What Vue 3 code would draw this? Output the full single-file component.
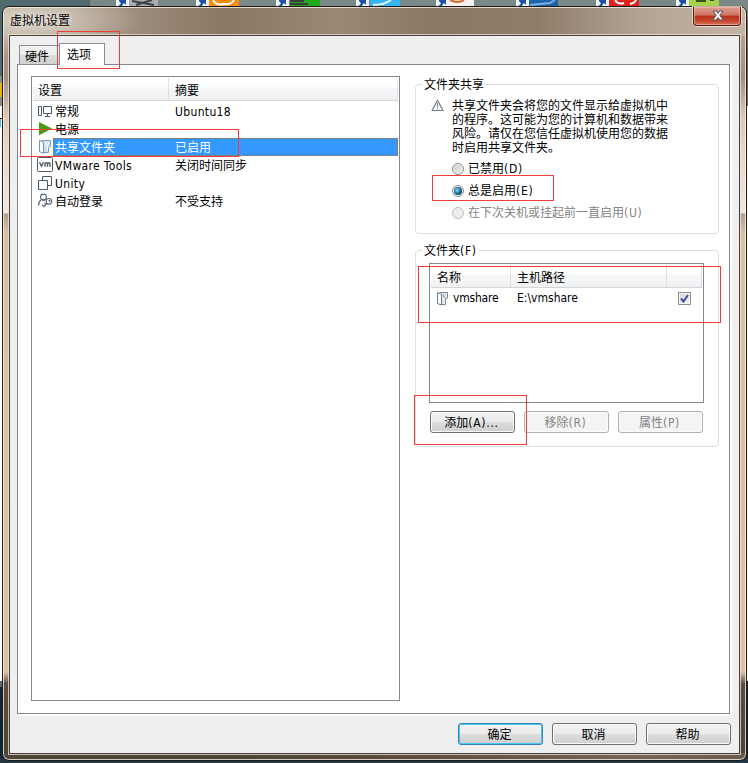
<template>
  <div class="desktop">
    <svg class="wallpaper" width="748" height="763" viewBox="0 0 748 763">
      <rect width="748" height="763" fill="#4f6b70" />
      <rect x="90" width="658" height="30" fill="#7a8988" />
      <rect x="0" y="76" width="3" height="30" fill="#8d8c87" />
      <rect x="0" y="83" width="2" height="14" fill="#f0b010" />
      <rect x="0" y="106" width="3" height="575" fill="#fff" />
      <rect x="0" y="118" width="3" height="1" fill="#111" />
      <rect x="0" y="119" width="1" height="8" fill="#3ec3f0" />
      <rect x="0" y="681" width="3" height="6" fill="#5b6670" />
      <rect x="0" y="687" width="3" height="76" fill="#0d2638" />
      <rect x="746" y="20" width="2" height="86" fill="#6d6760" />
      <rect x="746" y="106" width="2" height="575" fill="#fff" />
      <rect x="746" y="681" width="2" height="82" fill="#0d2638" />
      <rect x="0" y="758" width="748" height="5" fill="#223746" />
      <g v-for="(icon, i) in desktopIcons" :key="i" :transform="`translate(${116 + i * 80} 0)`">
        <rect :x="icon.x" width="30" height="9" :fill="icon.color" />
        <path :d="icon.mark" :stroke="icon.stroke" stroke-width="2" fill="none" />
        <rect width="13" height="7" fill="#eef2fb" />
        <path d="M2 6.500L5 3.500L3 1V0H10V5L8 3L5 7H2Z" fill="#22509c" />
      </g>
    </svg>

    <div class="window">
      <header class="titlebar">
        <h1 class="title">虚拟机设置</h1>
        <button class="close" type="button">
          <svg width="12" height="11" viewBox="0 0 12 11">
            <path d="M1 1H4.300L6 3.200L7.700 1H11L7.900 5.300L11.200 10H7.700L6 7.600L4.300 10H.8L4.100 5.300Z" fill="#f7f7f7" stroke="#50515f" stroke-width="1" />
          </svg>
        </button>
      </header>

      <main class="client">
        <nav class="tabs">
          <span class="tab">硬件</span>
          <span class="tab active">选项</span>
        </nav>

        <div class="panel">
          <div class="listview settings">
            <div class="head">
              <span class="cell-name">设置</span>
              <span class="cell-value">摘要</span>
            </div>
            <div
              v-for="row in rows"
              :key="row.name"
              class="row"
              :class="{ selected: row.name === selected }"
              @click="selected = row.name"
            >
              <svg class="row-icon" width="16" height="18" viewBox="0 0 16 18">
                <g v-if="row.icon === 'general'" fill="none" stroke="#4b5a68">
                  <path d="M1.500 4.500H4.500V13.500H1.500ZM6.500 4.500H14.500V11.500H6.500ZM10.500 11.500V14M8 14.500H13" />
                </g>
                <path v-else-if="row.icon === 'power'" d="M2 2L15 8.500L2 15.200Z" fill="#459a14" />
                <g v-else-if="row.icon === 'folder'" stroke="#6f9fc8">
                  <path d="M4.500 2.500H13.500V8.500L11.500 9.500V14.500H7" fill="#cfe2f2" />
                  <path d="M2.500 2.500L6.500 4.500V15.500L2.500 13.500Z" fill="#fff" stroke="#7c8fa0" />
                  <path d="M8.500 4V6.500L10.500 8V12M12 4L10.500 7.500" fill="none" stroke="#fff" />
                </g>
                <g v-else-if="row.icon === 'tools'">
                  <rect x=".5" y="1.500" width="15" height="14" rx="1" fill="#fff" stroke="#4b5a68" />
                  <path d="M2.500 6.300L4.500 10.300L6.500 6.300M8 10.800V7.800Q8 6.800 9.200 6.800T10.500 7.800V10.800M10.500 7.800Q10.700 6.800 11.800 6.800T13 7.800V10.800" fill="none" stroke="#4b5a68" stroke-width="1.400" />
                </g>
                <g v-else-if="row.icon === 'unity'" fill="#fff" stroke="#4b5a68">
                  <path d="M5.500 2.500H14.500V11.500H5.500Z" />
                  <path d="M1.500 6.500H10.500V15.500H1.500Z" />
                </g>
                <g v-else fill="none" stroke="#596674" stroke-width="1.100">
                  <circle cx="6.500" cy="5" r="2.900" />
                  <path d="M4.500 7.500Q1.500 9.500 1.500 13.500M8 8L5.500 9" />
                  <circle cx="11.900" cy="9.300" r="2.800" />
                  <path d="M10 11.500L6.500 15M7 14.500L5 12.800M9 12.500L7.500 11" />
                  <circle cx="12.500" cy="8.800" r=".5" />
                </g>
              </svg>
              <div class="row-body">
                <span class="row-name" :class="{ latin: isLatin(row.name) }">{{ row.name }}</span>
                <span class="row-value" :class="{ latin: isLatin(row.value) }">{{ row.value }}</span>
              </div>
            </div>
          </div>

          <div class="side">
            <section class="group sharing">
              <h2 class="legend">文件夹共享</h2>
              <div class="notice">
                <svg width="13" height="13" viewBox="0 0 13 13">
                  <path d="M6.500 1.200L12 11.500H1Z" fill="#fff" stroke="#6b7f91" stroke-width="1.200" stroke-linejoin="round" />
                  <path d="M6.500 4V8.500M6.500 9.300V10.500" stroke="#8796a3" stroke-width="1.300" />
                </svg>
                <p>共享文件夹会将您的文件显示给虚拟机中<br />的程序。这可能为您的计算机和数据带来<br />风险。请仅在您信任虚拟机使用您的数据<br />时启用共享文件夹。</p>
              </div>
              <div class="radios">
                <label
                  v-for="mode in modes"
                  :key="mode.id"
                  class="radio"
                  :class="{ checked: mode.id === sharing, disabled: mode.disabled }"
                  @click="!mode.disabled && (sharing = mode.id)"
                >
                  <span class="circle"></span>
                  <span>{{ mode.label }}<span class="key">({{ mode.key }})</span></span>
                </label>
              </div>
            </section>

            <section class="group folders">
              <h2 class="legend">文件夹<span class="key">(F)</span></h2>
              <div class="listview folder-list">
                <div class="head">
                  <span class="col-name">名称</span>
                  <span class="col-path">主机路径</span>
                  <span class="col-check"></span>
                </div>
                <div class="folder-row">
                  <svg width="13" height="15" viewBox="0 0 13 15">
                    <path d="M3.500 1.500H11.500V7L9.500 8V13.500H5" fill="#e3e8ec" stroke="#7d8994" />
                    <path d="M1.500 1.500L5.500 3.500V14L1.500 12.500Z" fill="#fff" stroke="#6c7883" />
                    <path d="M7.500 3.500V5.500L9.500 7" fill="none" stroke="#7d8994" />
                  </svg>
                  <span class="folder-name">vmshare</span>
                  <span class="folder-path">E:\vmshare</span>
                  <span class="checkbox">
                    <svg width="9" height="9" viewBox="0 0 9 9">
                      <path d="M1 4.500L3.500 7.500L8 1" fill="none" stroke="#3d4e9c" stroke-width="2" />
                    </svg>
                  </span>
                </div>
              </div>
              <div class="buttons">
                <button class="btn" type="button">添加<span class="key">(A)...</span></button>
                <button class="btn" type="button" disabled>移除<span class="key">(R)</span></button>
                <button class="btn" type="button" disabled>属性<span class="key">(P)</span></button>
              </div>
            </section>
          </div>
        </div>

        <footer class="footer">
          <button class="btn default" type="button">确定</button>
          <button class="btn" type="button">取消</button>
          <button class="btn" type="button">帮助</button>
        </footer>
      </main>
    </div>

    <div class="mark mark-tab"></div>
    <div class="mark mark-row"></div>
    <div class="mark mark-radio"></div>
    <div class="mark mark-folder"></div>
    <div class="mark mark-add"></div>
  </div>
</template>

<script setup>
import { ref } from 'vue'

const selected = ref('共享文件夹')
const sharing = ref('always')

const rows = [
  { icon: 'general', name: '常规', value: 'Ubuntu18' },
  { icon: 'power', name: '电源', value: '' },
  { icon: 'folder', name: '共享文件夹', value: '已启用' },
  { icon: 'tools', name: 'VMware Tools', value: '关闭时间同步' },
  { icon: 'unity', name: 'Unity', value: '' },
  { icon: 'login', name: '自动登录', value: '不受支持' }
]

const modes = [
  { id: 'off', label: '已禁用', key: 'D' },
  { id: 'always', label: '总是启用', key: 'E' },
  { id: 'until', label: '在下次关机或挂起前一直启用', key: 'U', disabled: true }
]

const desktopIcons = [
  { x: 12, color: '#a9adad', stroke: '#3f4343', mark: 'M16 1L38 5M20 5L36 0' },
  { x: 13, color: '#ff8a00', stroke: '#fff', mark: 'M17 0Q20 6 28 4Q36 5 38 0' },
  { x: 14, color: '#22a81c', stroke: '#3b3b3b', mark: 'M14 1H28M14 4H32' },
  { x: 14, color: '#35b5f5', stroke: '#e8f8ff', mark: 'M17 5Q28 5 35 0' },
  { x: 8, color: '#f4f2f0', stroke: '#e0601c', mark: 'M3 6L10 0M14 0Q22 4 28 0' },
  { x: 12, color: '#1b66ab', stroke: '#7ab0de', mark: 'M14 5L34 3L39 0' },
  { x: 13, color: '#e3211c', stroke: '#fff', mark: 'M19 0Q22 5 28 3M34 4Q39 3 40 0' },
  { x: 13, color: '#a4d24a', stroke: '#38521a', mark: 'M20 1H30M34 0H38' }
]

const isLatin = (text) => /^[\x20-\x7e]+$/.test(text)
</script>

<style>
body {
  margin: 0;
  overflow: hidden;
}
</style>

<style scoped>
.desktop {
  position: relative;
  width: 748px;
  height: 763px;
  overflow: hidden;
  font-family: 'DejaVu Sans Condensed', 'Noto Sans CJK SC', sans-serif;
  font-size: 12px;
  line-height: 18px;
  color: #000;
}

.desktop * {
  box-sizing: border-box;
}

.wallpaper {
  position: absolute;
  top: 0;
  left: 0;
}

.latin {
  letter-spacing: 0.35px;
}

.key {
  letter-spacing: 0.7px;
}

/* Aero frame */
.window {
  position: absolute;
  left: 2px;
  top: 6px;
  width: 745px;
  height: 755px;
  display: flex;
  flex-direction: column;
  padding: 0 6px 6px;
  border: 1px solid #1e1a18;
  border-radius: 7px;
  box-shadow: inset 0 0 0 1px rgba(255, 246, 236, 0.75);
  background:
    radial-gradient(ellipse 110px 34px at 30px 13px, rgba(225, 218, 207, 0.85), transparent) no-repeat,
    linear-gradient(90deg, #4f463a, #4d4337 30%, #5e5043 60%, #766558 85%, #6b5a4c) 0 100% / 100% 7px no-repeat,
    linear-gradient(90deg, #b5a797, #968572 22%, #8b7763 30%, #9b8874 45%, #8b7863 58%, #8f7d6a 72%, #b5a393 86%, #c5b5a5) 0 0 / 100% 29px no-repeat,
    linear-gradient(180deg, #b3a08f 30px, #a28f80 70px, #dec7b5 110px, #e8d5c8 140px, #efe7e0 206px, #b19d8c 207px, #d8bfa8 225px, #dec2a7 665px, #5a4c40 677px, #4c4337);
}

.titlebar {
  display: flex;
  justify-content: space-between;
  flex: none;
  height: 28px;
}

.title {
  margin: 5px 0 0 1px;
  font-size: 12px;
  font-weight: 400;
  line-height: 18px;
  text-shadow: 0 0 6px #fff;
}

.close {
  display: flex;
  align-items: center;
  justify-content: center;
  width: 48px;
  height: 19px;
  margin-right: -1px;
  padding: 0 0 1px 2px;
  border: 1px solid #431b18;
  border-top: 0;
  border-radius: 0 0 4px 4px;
  box-shadow: inset 0 0 0 1px rgba(255, 190, 170, 0.6), 0 0 0 1px rgba(255, 240, 230, 0.7);
  background: linear-gradient(180deg, #dc9d8f, #cf7664 45%, #b9301a 50%, #c4432a 75%, #d8715a);
}

.client {
  display: flex;
  flex-direction: column;
  flex: 1;
  min-height: 0;
  padding: 7px 9px 0 7px;
  border: 1px solid #4a403a;
  box-shadow: 0 0 0 1px rgba(240, 228, 218, 0.75);
  background: #efefef;
}

.tabs {
  position: relative;
  display: flex;
  align-items: flex-end;
  height: 22px;
  margin-bottom: -1px;
  padding-left: 2px;
}

.tab {
  width: 40px;
  height: 20px;
  padding: 2px 0 0 5px;
  border: 1px solid #8c8e99;
  border-right: 0;
  background: linear-gradient(180deg, #f3f3f3, #ebebeb 50%, #dcdcdc 51%, #d0d0d0);
}

.tab.active {
  width: 46px;
  height: 22px;
  padding-left: 7px;
  line-height: 19px;
  border-right: 1px solid #8c8e99;
  border-bottom: 0;
  background: #fff;
}

.panel {
  display: flex;
  gap: 15px;
  flex: none;
  height: 650px;
  padding: 11px 10px 12px 13px;
  border: 1px solid #83858f;
  box-shadow: 2px 2px 0 #fff;
  background: #fff;
}

.listview {
  border: 1px solid #828790;
  background: #fff;
}

.settings {
  width: 369px;
  height: 625px;
  padding: 1px;
}

.head {
  display: flex;
  height: 23px;
  line-height: 27px;
  border-bottom: 1px solid #d5d5d5;
  background: linear-gradient(180deg, #fff 40%, #f6f7f8 45%, #f0f1f3);
}

.cell-name {
  width: 136px;
  padding-left: 5px;
  border-right: 1px solid #dfe0e2;
}

.cell-value {
  flex: 1;
  padding-left: 6px;
  border-right: 1px solid #e3e4e6;
}

.row {
  display: flex;
  height: 18px;
  padding-left: 4px;
}

.head + .row {
  margin-top: 1px;
}

.row-icon {
  flex: none;
  overflow: visible;
}

.row-body {
  display: flex;
  flex: 1;
  line-height: 21px;
}

.row-name {
  width: 122px;
  padding-left: 2px;
}

.row-body .latin {
  line-height: 20px;
}

.row.selected .row-body {
  color: #fff;
  background: #3399ff;
  outline: 1px dotted #c66a12;
  outline-offset: -1px;
}

.side {
  width: 304px;
  padding-top: 8px;
}

.group {
  border: 1px solid #d5dfe5;
  border-radius: 4px;
}

.legend {
  width: max-content;
  margin: -9px 0 0 6px;
  padding: 0 2px;
  font-size: 12px;
  font-weight: 400;
  line-height: 18px;
  background: #fff;
}

.sharing {
  height: 150px;
}

.folders {
  height: 197px;
  margin-top: 16px;
}

.notice {
  display: flex;
  gap: 8px;
  margin: 5px 0 0 15px;
}

.notice p {
  margin: 0;
  line-height: 14px;
  white-space: nowrap;
}

.radios {
  margin: 3px 0 0 36px;
}

.radio {
  display: flex;
  align-items: center;
  gap: 4px;
  height: 22px;
}

.radio.disabled {
  color: #838383;
}

.circle {
  position: relative;
  width: 12px;
  height: 12px;
  border: 1px solid #8e8f8f;
  border-radius: 50%;
  box-shadow: inset 0 0 0 1px #f4f4f4;
  background: linear-gradient(135deg, #c4c8cc, #f6f6f6);
}

.radio.disabled .circle {
  border-color: #bcbcbc;
  background: #ececec;
}

.radio.checked .circle::before {
  content: '';
  position: absolute;
  inset: 1px;
  border-radius: 50%;
  background: radial-gradient(circle at 40% 40%, #8fdcf8, #2382ad 40%, #0b3657 75%);
}

.folder-list {
  width: 275px;
  height: 140px;
  margin: 3px 0 8px 13px;
  padding: 1px;
}

.col-name {
  width: 80px;
  padding-left: 6px;
  border-right: 1px solid #dfe0e2;
}

.col-path {
  width: 156px;
  padding-left: 6px;
  border-right: 1px solid #dfe0e2;
}

.col-check {
  flex: 1;
  border-right: 1px solid #dfe0e2;
}

.folder-row {
  display: flex;
  align-items: center;
  height: 18px;
  margin-top: 1px;
  padding-left: 5px;
}

.folder-name {
  width: 64px;
  margin-left: 4px;
  letter-spacing: -0.2px;
}

.folder-path {
  width: 161px;
}

.checkbox {
  display: flex;
  align-items: center;
  justify-content: center;
  width: 13px;
  height: 13px;
  border: 1px solid #8e8f8f;
  box-shadow: inset 0 0 0 1px #f4f4f4;
  background: linear-gradient(135deg, #cfd4da, #f6f6f6);
}

.buttons {
  display: flex;
  gap: 9px;
  padding-left: 14px;
}

.btn {
  width: 85px;
  height: 22px;
  padding: 2px 2px 0 0;
  border: 1px solid #707070;
  border-radius: 3px;
  box-shadow: inset 0 0 0 1px #fbfbfb;
  font: inherit;
  line-height: 18px;
  color: #000;
  background: linear-gradient(180deg, #f2f2f2, #ebebeb 50%, #dddddd 51%, #cfcfcf);
}

.btn:disabled {
  border-color: #adb2b5;
  color: #838383;
  background: #f4f4f4;
}

.btn.default {
  border-color: #3c7fb1;
  box-shadow: inset 0 0 0 1px #46c8f4;
}

.footer {
  display: flex;
  justify-content: flex-end;
  gap: 9px;
  margin: 9px -1px 0 0;
}

/* Red annotation boxes over the dialog */
.mark {
  position: absolute;
  border: 1px solid #f33b3b;
  pointer-events: none;
}

.mark-tab {
  left: 57px;
  top: 31px;
  width: 63px;
  height: 38px;
}

.mark-row {
  left: 20px;
  top: 129px;
  width: 219px;
  height: 28px;
}

.mark-radio {
  left: 432px;
  top: 175px;
  width: 122px;
  height: 26px;
}

.mark-folder {
  left: 418px;
  top: 266px;
  width: 303px;
  height: 57px;
}

.mark-add {
  left: 414px;
  top: 395px;
  width: 113px;
  height: 50px;
}
</style>
